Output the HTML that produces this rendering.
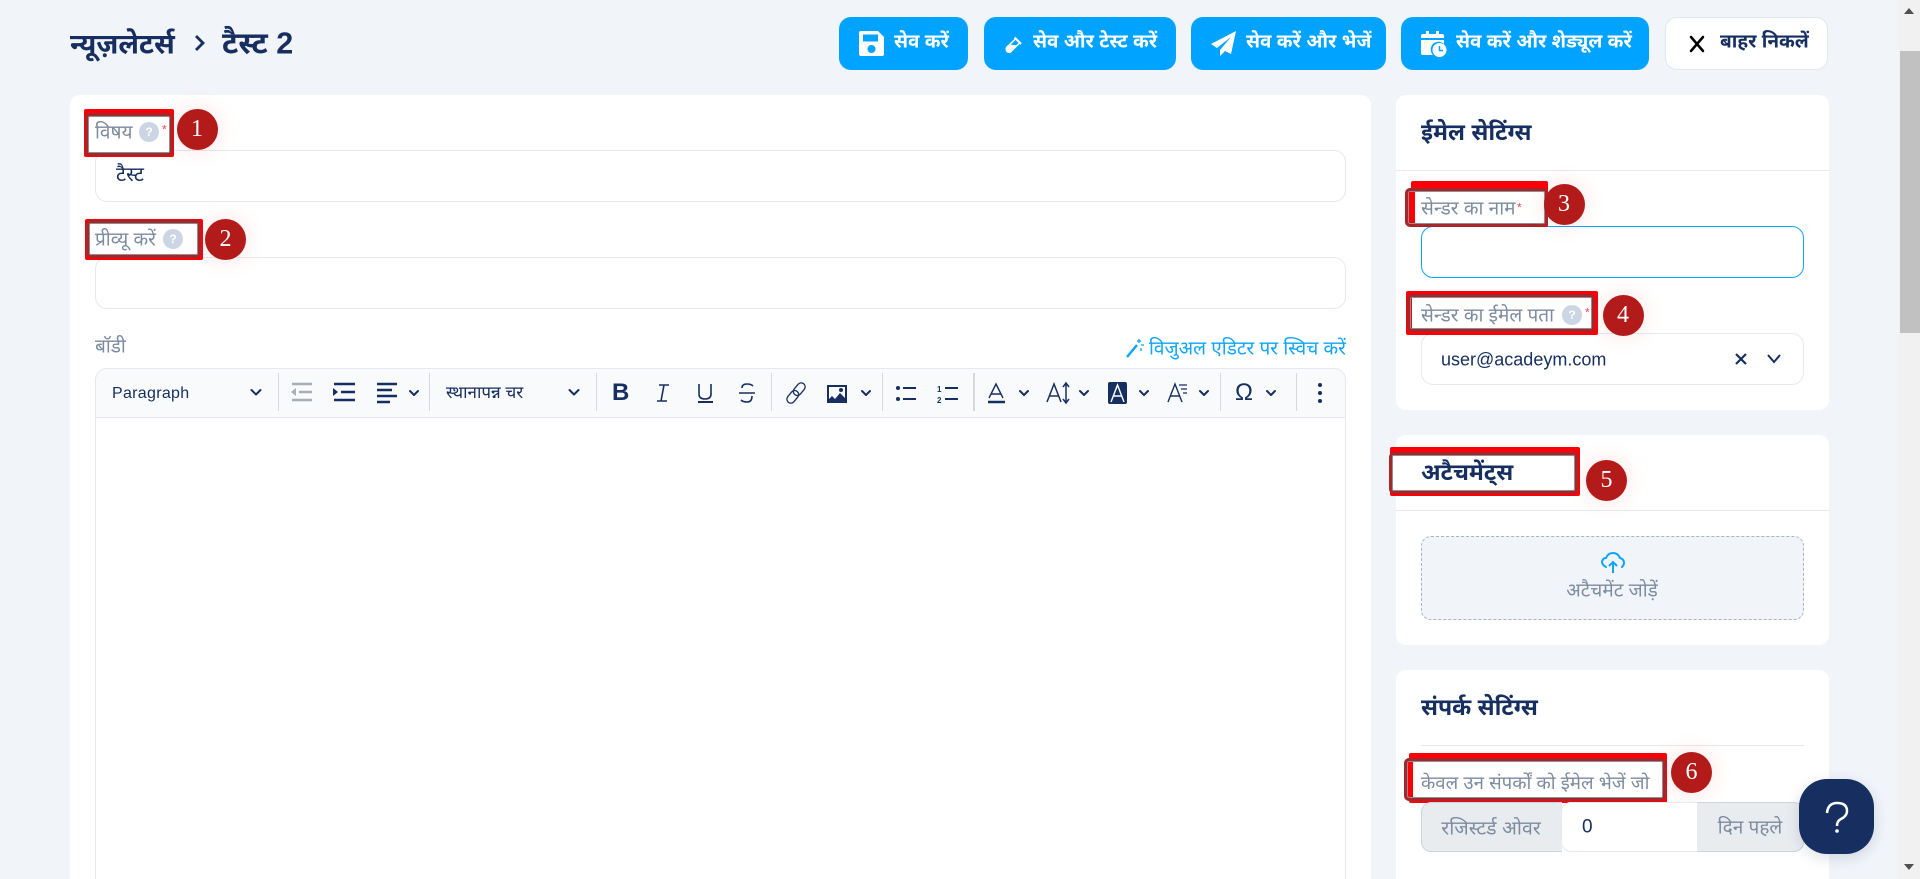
<!DOCTYPE html>
<html lang="hi"><head><meta charset="utf-8"><title>न्यूज़लेटर्स</title>
<style>
html,body{margin:0;padding:0;width:1920px;height:879px;overflow:hidden;background:#f1f4f9}
body{position:relative;font-family:"Liberation Sans","Noto Sans Devanagari","Lohit Devanagari",sans-serif;color:#172f60}
.a{position:absolute;box-sizing:border-box}
.t{position:absolute;white-space:nowrap;line-height:1.4;transform:translateY(-50%)}
.card{position:absolute;background:#fff;border-radius:10px}
.inp{position:absolute;box-sizing:border-box;background:#fff;border:1.5px solid #e6e9ef;border-radius:12px}
.btn{position:absolute;top:17px;height:53px;background:#00a3ff;border-radius:12px}
.bt{color:#fff;font-weight:700;font-size:19px;top:43px}
.lb{color:#7d8ba0;font-size:19px}
.h{color:#172f60;font-weight:700;font-size:23px}
.rb{position:absolute;background:#fb0007;border-radius:2px}
.rb i{position:absolute;display:block;box-sizing:border-box;background:#fff;border:3px solid #a5262b;border-radius:5px;box-shadow:inset 0 0 0 1px #8f8f8f}
.n{position:absolute;width:41px;height:41px;margin:-20.5px 0 0 -20.5px;border-radius:50%;background:#b31b1b;color:#fff;font-family:"Liberation Serif",serif;font-size:24px;line-height:41px;text-align:center;box-shadow:0 0 22px rgba(255,60,60,.16)}
.q{position:absolute;width:20px;height:20px;margin:-10px 0 0 -10px;border-radius:50%;background:#cbd5e3;color:#fff;font-size:12px;font-weight:700;line-height:20px;text-align:center}
.s{color:#f0435a;font-size:12px}
.sep{position:absolute;top:373px;width:1px;height:38px;background:#d5d8de}
svg{position:absolute;overflow:visible}
.ch{fill:none;stroke:#172f60;stroke-width:2;stroke-linecap:round;stroke-linejoin:round}
</style></head><body>

<div class="t" style="left:70px;top:44px;font-size:28px;font-weight:700">न्यूज़लेटर्स</div>
<svg style="left:194px;top:34px" width="12" height="18" viewBox="0 0 12 18"><path d="M2 2L9 9L2 16" fill="none" stroke="#172f60" stroke-width="2.800"/></svg>
<div class="t" style="left:222px;top:44px;font-size:30.500px;font-weight:700">टैस्ट 2</div>

<div class="btn" style="left:839px;width:129px"></div>
<div class="btn" style="left:984px;width:192px"></div>
<div class="btn" style="left:1191px;width:195px"></div>
<div class="btn" style="left:1401px;width:248px"></div>
<div class="btn" style="left:1665px;width:163px;background:#fff;border:1px solid #e3e7ee;box-sizing:border-box"></div>

<svg style="left:859px;top:31px" width="25" height="25" viewBox="0 0 25 25"><path fill="#fff" d="M2 0H19L25 6V23Q25 25 23 25H2Q0 25 0 23V2Q0 0 2 0ZM4 3.500V10.500H19V3.500ZM12.500 14A4 4 0 1 0 12.500 22A4 4 0 1 0 12.500 14Z" fill-rule="evenodd"/></svg>
<span class="t bt" style="left:894px">सेव करें</span>
<svg style="left:1005px;top:36px" width="17" height="17" viewBox="0 0 17 17"><path d="M11 2.500L15 6.500L6 15.500Q4 17 2 15.500Q0.500 13 2 11Z" fill="none" stroke="#fff" stroke-width="1.500"/><path d="M5 8.500L12 9.500L6 15.500Q4 17 2 15.500Q0.500 13 2 11Z" fill="#fff"/><path d="M9.500 1.500L16 8" stroke="#fff" stroke-width="2"/></svg>
<span class="t bt" style="left:1033px">सेव और टेस्ट करें</span>
<svg style="left:1211px;top:31px" width="25" height="25" viewBox="0 0 25 25"><path fill="#fff" d="M25 0L0 13L6 17L20 6L9 19V25L14 20L20 23Z"/></svg>
<span class="t bt" style="left:1246px">सेव करें और भेजें</span>
<svg style="left:1421px;top:30px" width="26" height="27" viewBox="0 0 26 27"><path fill="#fff" d="M2 4H5V1H8V4H15V1H18V4H21Q23 4 23 6V8H0V6Q0 4 2 4ZM0 10H23V14A7.500 7.500 0 0 0 12 25H2Q0 25 0 23Z"/><circle cx="18.500" cy="20" r="7" fill="#fff"/><path d="M18.500 16V20.500H22" fill="none" stroke="#00a3ff" stroke-width="1.500"/></svg>
<span class="t bt" style="left:1456px">सेव करें और शेड्यूल करें</span>
<svg style="left:1690px;top:36px" width="14" height="16" viewBox="0 0 14 16"><path d="M1 1L13 15M13 1L1 15" stroke="#000" stroke-width="2.500" stroke-linecap="round"/></svg>
<span class="t bt" style="left:1720px;color:#172f60">बाहर निकलें</span>

<div class="card" style="left:70px;top:95px;width:1301px;height:800px"></div>
<div class="card" style="left:1396px;top:95px;width:433px;height:315px"></div>
<div class="card" style="left:1396px;top:435px;width:433px;height:210px"></div>
<div class="card" style="left:1396px;top:670px;width:433px;height:230px"></div>

<div class="inp" style="left:95px;top:150px;width:1251px;height:52px"></div>
<div class="inp" style="left:95px;top:257px;width:1251px;height:52px"></div>
<div class="t" style="left:116px;top:175px;font-size:20px">टैस्ट</div>

<div class="rb" style="left:84px;top:109px;width:90px;height:48px"><i style="left:1px;top:4px;width:88px;height:43px"></i></div>
<div class="t lb" style="left:95px;top:134px">विषय</div>
<div class="q" style="left:149px;top:132px">?</div>
<div class="t s" style="left:162px;top:130px">*</div>
<div class="n" style="left:197px;top:129px">1</div>

<div class="rb" style="left:85px;top:219px;width:118px;height:41px"><i style="left:1px;top:1px;width:115px;height:38px"></i></div>
<div class="t lb" style="left:95px;top:241px">प्रीव्यू करें</div>
<div class="q" style="left:173px;top:239px">?</div>
<div class="n" style="left:225.500px;top:239px">2</div>

<div class="t lb" style="left:95px;top:348px">बॉडी</div>
<svg style="left:1126px;top:338px" width="18" height="20" viewBox="0 0 18 20"><path d="M1 19L11 7" stroke="#0ea5ff" stroke-width="2.500"/><path d="M13 1V5M11 3H15M15 7H18M15 10V13" stroke="#0ea5ff" stroke-width="1.300"/></svg>
<div class="t" style="left:1149px;top:350px;font-size:19px;color:#0ea5ff">विजुअल एडिटर पर स्विच करें</div>

<!-- editor -->
<div class="a" style="left:95px;top:368px;width:1251px;height:560px;border:1.5px solid #e6e9ef;border-radius:12px;background:#fff"></div>
<div class="a" style="left:95px;top:368px;width:1251px;height:50px;border:1.5px solid #e6e9ef;border-radius:12px 12px 0 0;background:#f8fafc"></div>
<div class="t" style="left:112px;top:394px;font-size:16px;letter-spacing:.3px">Paragraph</div>
<div class="t" style="left:446px;top:393px;font-size:17px">स्थानापन्न चर</div>
<div class="sep" style="left:278px"></div><div class="sep" style="left:429px"></div><div class="sep" style="left:596px"></div><div class="sep" style="left:771px"></div><div class="sep" style="left:882px"></div><div class="sep" style="left:973px;width:2px"></div><div class="sep" style="left:1220px"></div><div class="sep" style="left:1296px"></div>

<svg style="left:0;top:0" width="1920" height="879" viewBox="0 0 1920 879">
<path class="ch" d="M251.500 390L256 394.500L260.500 390M410 391L414 395L418 391M569.500 390L574 394.500L578.500 390M862 391L866 395L870 391M1020 391L1024 395L1028 391M1080 391L1084 395L1088 391M1140 391L1144 395L1148 391M1200 391L1204 395L1208 391M1267 391L1271 395L1275 391"/>
<!-- outdent -->
<g stroke="#a9adb5" stroke-width="2.500"><path d="M292 384H312M299 392H312M292 400H312"/></g><path d="M296 388V396L291 392Z" fill="#a9adb5"/>
<!-- indent -->
<g stroke="#172f60" stroke-width="2.500"><path d="M334 384H355M341 392H355M334 400H355"/></g><path d="M333 388V396L338 392Z" fill="#172f60"/>
<!-- align -->
<g stroke="#172f60" stroke-width="2.500"><path d="M377 384H397M377 390H392M377 396H397M377 402H390"/></g>
<!-- ital U S -->
<path d="M659 385H669M657 401H667M664 385L661 401" stroke="#172f60" stroke-width="1.600" fill="none"/>
<path d="M699 384V394Q699 399 705 399Q711 399 711 394V384" stroke="#172f60" stroke-width="1.600" fill="none"/><path d="M698 402H713" stroke="#172f60" stroke-width="2"/>
<path d="M753 386Q751 384 747 384Q742 384 742 388M739 393H755M752 396Q752 402 747 402Q743 402 741 400" stroke="#172f60" stroke-width="1.600" fill="none"/>
<!-- link -->
<g fill="none" stroke="#172f60" stroke-width="1.300" transform="rotate(-50 796 393)"><rect x="784" y="389" width="14" height="8" rx="4"/><rect x="794" y="389" width="14" height="8" rx="4"/></g>
<!-- image -->
<path d="M827 385H847V403H827Z" fill="#172f60"/><path d="M829 387H845V398L840 393L835 399L832 396L829 399Z" fill="#f8fafc"/><circle cx="841" cy="390" r="2" fill="#172f60"/>
<!-- ul -->
<circle cx="898" cy="388" r="2" fill="#172f60"/><circle cx="898" cy="399" r="2" fill="#172f60"/><path d="M903 388H916M903 399H916" stroke="#172f60" stroke-width="2"/>
<!-- ol -->
<text x="937" y="392" font-size="8" font-weight="700" fill="#172f60" font-family="Liberation Sans">1</text><text x="937" y="403" font-size="8" font-weight="700" fill="#172f60" font-family="Liberation Sans">2</text><path d="M945 388H958M945 399H958" stroke="#172f60" stroke-width="2"/>
<!-- font color -->
<path d="M989 398L996 384L1003 398M991 394H1001" stroke="#172f60" stroke-width="1.400" fill="none"/><path d="M988 402H1005" stroke="#172f60" stroke-width="2.500"/>
<!-- font size -->
<path d="M1047 402L1054 384L1061 402M1049 396H1059" stroke="#172f60" stroke-width="1.500" fill="none"/><path d="M1066 384V402M1063 387L1066 383L1069 387M1063 399L1066 403L1069 399" stroke="#172f60" stroke-width="1.500" fill="none"/>
<!-- bg color -->
<rect x="1108" y="382" width="19" height="22" rx="2" fill="#172f60"/><path d="M1111 402L1117.500 385L1124 402M1113 396H1122" stroke="#fff" stroke-width="1.400" fill="none"/>
<!-- font style -->
<path d="M1168 402L1175 384L1182 402M1170 396H1180" stroke="#172f60" stroke-width="1.400" fill="none"/><path d="M1179 385H1187M1181 389H1187M1183 393H1187" stroke="#172f60" stroke-width="1.300"/>
<circle cx="1320" cy="385" r="2" fill="#172f60"/><circle cx="1320" cy="393" r="2" fill="#172f60"/><circle cx="1320" cy="401" r="2" fill="#172f60"/>
</svg>
<div class="t" style="left:612px;top:393px;font-size:24px;font-weight:700">B</div>
<div class="t" style="left:1244px;top:393px;font-size:24px;transform:translate(-50%,-50%)">Ω</div>

<!-- email settings -->
<div class="t h" style="left:1421px;top:132px">ईमेल सेटिंग्स</div>
<div class="a" style="left:1396px;top:170px;width:433px;height:1px;background:#e6e9ef"></div>
<div class="inp" style="left:1421px;top:226px;width:383px;height:52px;border:1.500px solid #0ea5ff"></div>
<div class="rb" style="left:1411px;top:181px;width:137px;height:46px"><i style="left:-6px;top:7px;width:143px;height:39px;background:linear-gradient(90deg,#fb0007 0 7px,#fff 7px)"></i></div>
<div class="t lb" style="left:1421px;top:210px">सेन्डर का नाम</div>
<div class="t s" style="left:1517px;top:208px">*</div>
<div class="n" style="left:1564px;top:204px">3</div>

<div class="inp" style="left:1421px;top:333px;width:383px;height:52px"></div>
<div class="rb" style="left:1406px;top:291px;width:192px;height:44px"><i style="left:1px;top:3px;width:188px;height:38px;background:linear-gradient(90deg,#fb0007 0 2px,#fff 2px)"></i></div>
<div class="t lb" style="left:1421px;top:317px">सेन्डर का ईमेल पता</div>
<div class="q" style="left:1572px;top:315px">?</div>
<div class="t s" style="left:1585px;top:313px">*</div>
<div class="n" style="left:1623px;top:315px">4</div>
<div class="t" style="left:1441px;top:360px;font-size:18px">user@acadeym.com</div>
<svg style="left:1735px;top:352px" width="46" height="14" viewBox="0 0 46 14"><path d="M1 2L11 12M11 2L1 12" stroke="#172f60" stroke-width="2.200"/><path d="M33 3L39 10L45 3" stroke="#172f60" stroke-width="2" fill="none"/></svg>

<!-- attachments -->
<div class="a" style="left:1396px;top:510px;width:433px;height:1px;background:#e6e9ef"></div>
<div class="rb" style="left:1390px;top:447px;width:190px;height:49px"><i style="left:-1px;top:5px;width:189px;height:42px"></i></div>
<div class="t h" style="left:1421px;top:472px">अटैचमेंट्स</div>
<div class="n" style="left:1606.500px;top:480px">5</div>
<div class="a" style="left:1421px;top:536px;width:383px;height:84px;border:1.500px dashed #a9b3c2;border-radius:10px;background:#f1f4f9"></div>
<svg style="left:1601px;top:552px" width="24" height="22" viewBox="0 0 24 22"><path d="M5 15Q1 13 1 9.500Q2 6 5 6Q7 1 12 1Q17 1 19 6Q23 7 23 11Q23 13 21 15" fill="none" stroke="#0ea5ff" stroke-width="2" stroke-linecap="round"/><path d="M12 21V10M8 14L12 10L16 14" fill="none" stroke="#0ea5ff" stroke-width="2"/></svg>
<div class="t" style="left:1612px;top:592px;font-size:19px;color:#7d8ba0;transform:translate(-50%,-50%)">अटैचमेंट जोड़ें</div>

<!-- contact settings -->
<div class="t h" style="left:1421px;top:707px">संपर्क सेटिंग्स</div>
<div class="a" style="left:1421px;top:745px;width:383px;height:1px;background:#e6e9ef"></div>
<div class="rb" style="left:1409px;top:753px;width:258px;height:50px"><i style="left:-5px;top:5px;width:262px;height:43px;background:linear-gradient(90deg,#fb0007 0 6px,#fff 6px)"></i></div>
<div class="t lb" style="left:1421px;top:783px;font-size:18.600px">केवल उन संपर्कों को ईमेल भेजें जो</div>
<div class="n" style="left:1691.500px;top:772px">6</div>

<div class="a" style="left:1421px;top:802px;width:141px;height:50px;background:#e9ecef;border:1.500px solid #ced4da;border-right:0;border-radius:10px 0 0 10px"></div>
<div class="a" style="left:1561px;top:802px;width:137px;height:50px;background:#fff;border:1.500px solid #e6e9ef;border-radius:10px 0 0 10px"></div>
<div class="a" style="left:1697px;top:802px;width:107px;height:50px;background:#e9ecef;border:1.500px solid #ced4da;border-left:0;border-radius:0 10px 10px 0"></div>
<div class="t" style="left:1491px;top:829px;font-size:19.500px;color:#7d8ba0;transform:translate(-50%,-50%)">रजिस्टर्ड ओवर</div>
<div class="t" style="left:1582px;top:828px;font-size:19px">0</div>
<div class="t" style="left:1750px;top:829px;font-size:19px;color:#7d8ba0;transform:translate(-50%,-50%)">दिन पहले</div>

<!-- help bubble -->
<div class="a" style="left:1799px;top:779px;width:75px;height:75px;background:#172f60;border-radius:28px;box-shadow:0 4px 14px rgba(23,47,96,.15)"></div>
<svg style="left:0;top:0" width="1920" height="879" viewBox="0 0 1920 879"><path d="M1827 813Q1828 803 1837 803Q1847 803 1847 811Q1847 816 1841 819Q1837 821 1837 826" fill="none" stroke="#fff" stroke-width="2.500"/><circle cx="1837" cy="831" r="1.800" fill="#fff"/></svg>

<!-- scrollbar -->
<div class="a" style="left:1899px;top:0;width:21px;height:879px;background:#f1f1f1"></div>
<div class="a" style="left:1900px;top:51px;width:20px;height:282px;background:#c1c1c1"></div>
<svg style="left:1904px;top:8px" width="10" height="6" viewBox="0 0 10 6"><path d="M5 0L10 6H0Z" fill="#505050"/></svg>
<svg style="left:1904px;top:864px" width="10" height="6" viewBox="0 0 10 6"><path d="M0 0H10L5 6Z" fill="#505050"/></svg>
</body></html>
